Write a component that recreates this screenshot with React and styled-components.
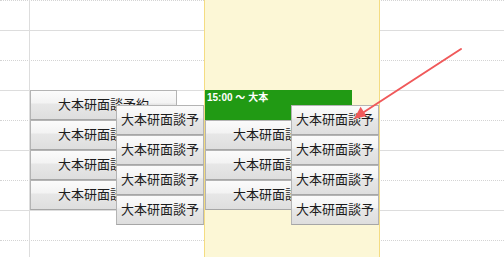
import styled, { createGlobalStyle } from "styled-components";

const GlobalStyle = createGlobalStyle`
  html, body {
    margin: 0;
    padding: 0;
    background: #ffffff;
  }
  body {
    font-family: "Liberation Sans", "Noto Sans CJK JP", sans-serif;
  }
`;

const Calendar = styled.div`
  display: grid;
  width: 504px;
  height: 257px;
  overflow: hidden;
  position: relative;

  > * {
    grid-area: 1 / 1;
  }
`;

const Columns = styled.div`
  display: flex;
  height: 100%;
`;

const Axis = styled.div`
  width: 29px;
  flex: none;
`;

const DayColumn = styled.div`
  position: relative;
  box-sizing: border-box;
  flex: ${(p) => (p.$grow ? "1" : "none")};
  width: ${(p) => (p.$width ? `${p.$width}px` : "auto")};
  border-left: ${(p) =>
    p.$today ? "1px solid #f4dc82" : p.$line ? "1px solid #dddddd" : "none"};
  border-right: ${(p) => (p.$today ? "1px solid #f4dc82" : "none")};
  background: ${(p) => (p.$today ? "#fcf7d6" : "transparent")};
`;

const Slots = styled.div`
  display: flex;
  flex-direction: column;
`;

const Slot = styled.div`
  box-sizing: border-box;
  height: 30px;
  flex: none;
  border-top: 1px ${(p) => (p.$major ? "solid #dddddd" : "dotted #d4d4d4")};
`;

const EventStack = styled.div`
  position: absolute;
  z-index: 1;
  left: 0;
  top: 90px;
  width: 147px;
  display: flex;
  flex-direction: column;
`;

const OverlayStack = styled.div`
  position: absolute;
  z-index: 2;
  left: 86px;
  top: 105px;
  width: 88px;
  display: flex;
  flex-direction: column;
`;

const Booking = styled.div`
  box-sizing: border-box;
  height: 30px;
  flex: none;
  overflow: hidden;
  white-space: nowrap;
  border: 1px solid #b4b4b4;
  border-bottom-color: #a6a6a6;
  background: linear-gradient(
    to bottom,
    #fbfbfb 0%,
    #f3f3f3 42%,
    #e7e7e7 47%,
    #dedede 100%
  );
  color: #1c1c1c;
  font-size: 13px;
  line-height: 27px;
  text-align: ${(p) => (p.$compact ? "left" : "center")};
  padding-left: ${(p) => (p.$compact ? "4px" : "0")};
`;

const TimedEvent = styled.div`
  box-sizing: border-box;
  height: 30px;
  flex: none;
  background: #219a14;
  color: #ffffff;
  font-size: 10px;
  font-weight: bold;
  line-height: 12px;
  padding: 2px 2px;
`;

const Arrow = styled.svg`
  position: absolute;
  z-index: 3;
  left: 0;
  top: 0;
  width: 504px;
  height: 257px;
  pointer-events: none;
`;

const majorRows = Array.from({ length: 9 }, (_, i) => i % 2 === 1);

function Column({ head, today, width, line }) {
  return (
    <DayColumn $today={today} $width={width} $line={line}>
      <EventStack>
        {head}
        <Booking>大本研面談予約</Booking>
        <Booking>大本研面談予約</Booking>
        <Booking>大本研面談予約</Booking>
      </EventStack>
      <OverlayStack>
        <Booking $compact>大本研面談予</Booking>
        <Booking $compact>大本研面談予</Booking>
        <Booking $compact>大本研面談予</Booking>
        <Booking $compact>大本研面談予</Booking>
      </OverlayStack>
    </DayColumn>
  );
}

export default function App() {
  return (
    <>
      <GlobalStyle />
      <Calendar>
        <Columns>
          <Axis />
          <Column line width={175} head={<Booking>大本研面談予約</Booking>} />
          <Column today width={176} head={<TimedEvent>15:00 〜 大本</TimedEvent>} />
          <DayColumn $grow />
        </Columns>
        <Slots>
          {majorRows.map((major, i) => (
            <Slot key={i} $major={major} />
          ))}
        </Slots>
        <Arrow viewBox="0 0 504 257">
          <line
            x1="461"
            y1="49"
            x2="364"
            y2="112"
            stroke="#f0595a"
            strokeWidth="2"
            strokeLinecap="round"
          />
          <polygon points="354,119 366.5,116 360.6,106.8" fill="#f0595a" />
        </Arrow>
      </Calendar>
    </>
  );
}
